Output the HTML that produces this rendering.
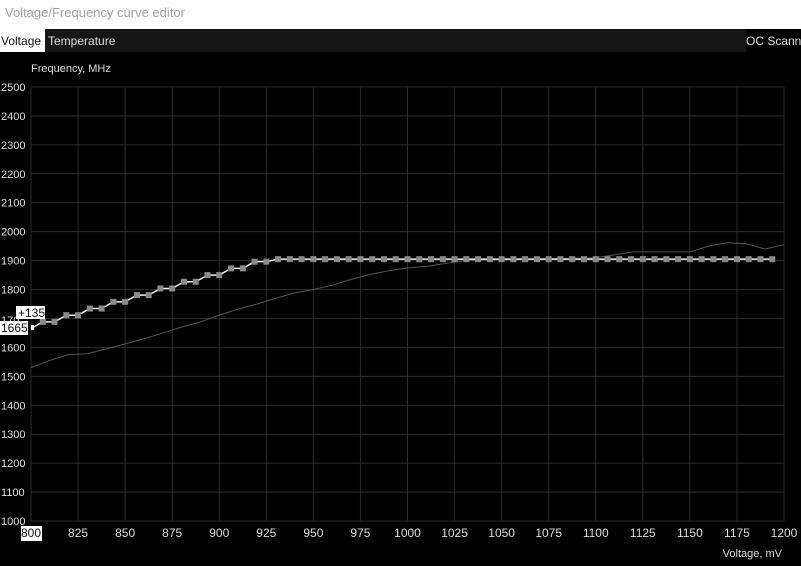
<!DOCTYPE html>
<html><head><style>
body{margin:0;width:801px;height:566px;overflow:hidden;background:#000;font-family:"Liberation Sans",sans-serif;}
#title{position:absolute;left:0;top:0;width:801px;height:29px;background:#fff;color:#a0a0a0;font-size:13px;line-height:26px;padding-left:5px;box-sizing:border-box}
#tabs{position:absolute;left:0;top:29px;width:801px;height:23px;background:#161616;color:#ddd;font-size:12px}
#tabs .a{position:absolute;left:0;top:0;width:44px;height:23px;background:#fff;color:#111;line-height:24px;padding-left:1px}
#tabs .b{position:absolute;left:48px;top:0;line-height:24px}
#tabs .c{position:absolute;right:0;top:0;width:55px;height:23px;background:#000;line-height:24px;padding-left:0px;white-space:nowrap;overflow:hidden}
svg{position:absolute;left:0;top:0}
</style></head><body>
<div id="title">Voltage/Frequency curve editor</div>
<div id="tabs"><div class="a">Voltage</div><div class="b">Temperature</div><div class="c">OC Scanner</div></div>
<svg id="s" width="801" height="566" style="top:0"></svg>
<script>
var s=document.getElementById('s'),h='';
var X0=31,X1=784,Y0=87,Y1=521;
function xv(v){return X0+(v-800)/400*(X1-X0)}
function yf(f){return Y0+(2500-f)/1500*(Y1-Y0)}
h+='<text x="31" y="72" fill="#ddd" font-size="11" font-family="Liberation Sans">Frequency, MHz</text>';
for(var f=1000;f<=2500;f+=100){var y=yf(f);h+='<line x1="31" x2="784" y1="'+y+'" y2="'+y+'" stroke="#2c2c2c"/>';
if(f!=1700)h+='<text x="1" y="'+(y+4)+'" fill="#ddd" font-size="11" font-family="Liberation Sans">'+f+'</text>';}
h+='<text x="1" y="324" fill="#ddd" font-size="11" font-family="Liberation Sans">170</text>';
for(var v=800;v<=1200;v+=25){var x=xv(v);h+='<line x1="'+x+'" x2="'+x+'" y1="87" y2="521" stroke="#2c2c2c"/>';
if(v>800)h+='<text x="'+x+'" y="537" text-anchor="middle" fill="#ddd" font-size="12" font-family="Liberation Sans">'+v+'</text>';}
h+='<rect x="21" y="526" width="21" height="15" fill="#fff"/><text x="31" y="537" text-anchor="middle" fill="#111" font-size="12" font-family="Liberation Sans">800</text>';
h+='<text x="782" y="557" text-anchor="end" fill="#ddd" font-size="11" font-family="Liberation Sans">Voltage, mV</text>';
var lp=[[800,1530],[810,1555],[820,1575],[830,1578],[840,1595],[850,1612],[860,1630],[870,1650],[880,1670],[890,1688],[900,1712],[910,1732],[920,1750],[930,1770],[940,1788],[950,1800],[960,1815],[970,1835],[980,1852],[990,1865],[1000,1875],[1010,1880],[1020,1890],[1030,1900],[1050,1903],[1100,1910],[1120,1930],[1130,1930],[1150,1930],[1160,1950],[1170,1962],[1180,1958],[1190,1940],[1200,1955]];
h+='<polyline fill="none" stroke="#555" stroke-width="1" points="'+lp.map(function(p){return xv(p[0])+','+yf(p[1])}).join(' ')+'"/>';
var pts=[];for(var i=0;i<=63;i++){var v=800+i*6.25;var f=Math.min(1905,1665+Math.round((v-800)/12.5)*12.5*1.85);pts.push([xv(v),yf(f)]);}
h+='<polyline fill="none" stroke="#eee" stroke-width="1.5" points="'+pts.map(function(p){return p[0]+','+p[1]}).join(' ')+'"/>';
pts.forEach(function(p,i){if(i>0)h+='<rect x="'+(p[0]-3)+'" y="'+(p[1]-3)+'" width="6" height="6" fill="#8a8a8a"/>';});
h+='<rect x="16" y="306" width="29" height="13" fill="#fff"/><text x="18" y="317" fill="#111" font-size="12" font-family="Liberation Sans">+135</text>';
h+='<rect x="0" y="321" width="28" height="14" fill="#fff"/><text x="1" y="332" fill="#111" font-size="12" font-family="Liberation Sans">1665</text>';
h+='<rect x="31" y="325" width="3" height="5" fill="#fff"/>';
s.innerHTML=h;
</script>
</body></html>
